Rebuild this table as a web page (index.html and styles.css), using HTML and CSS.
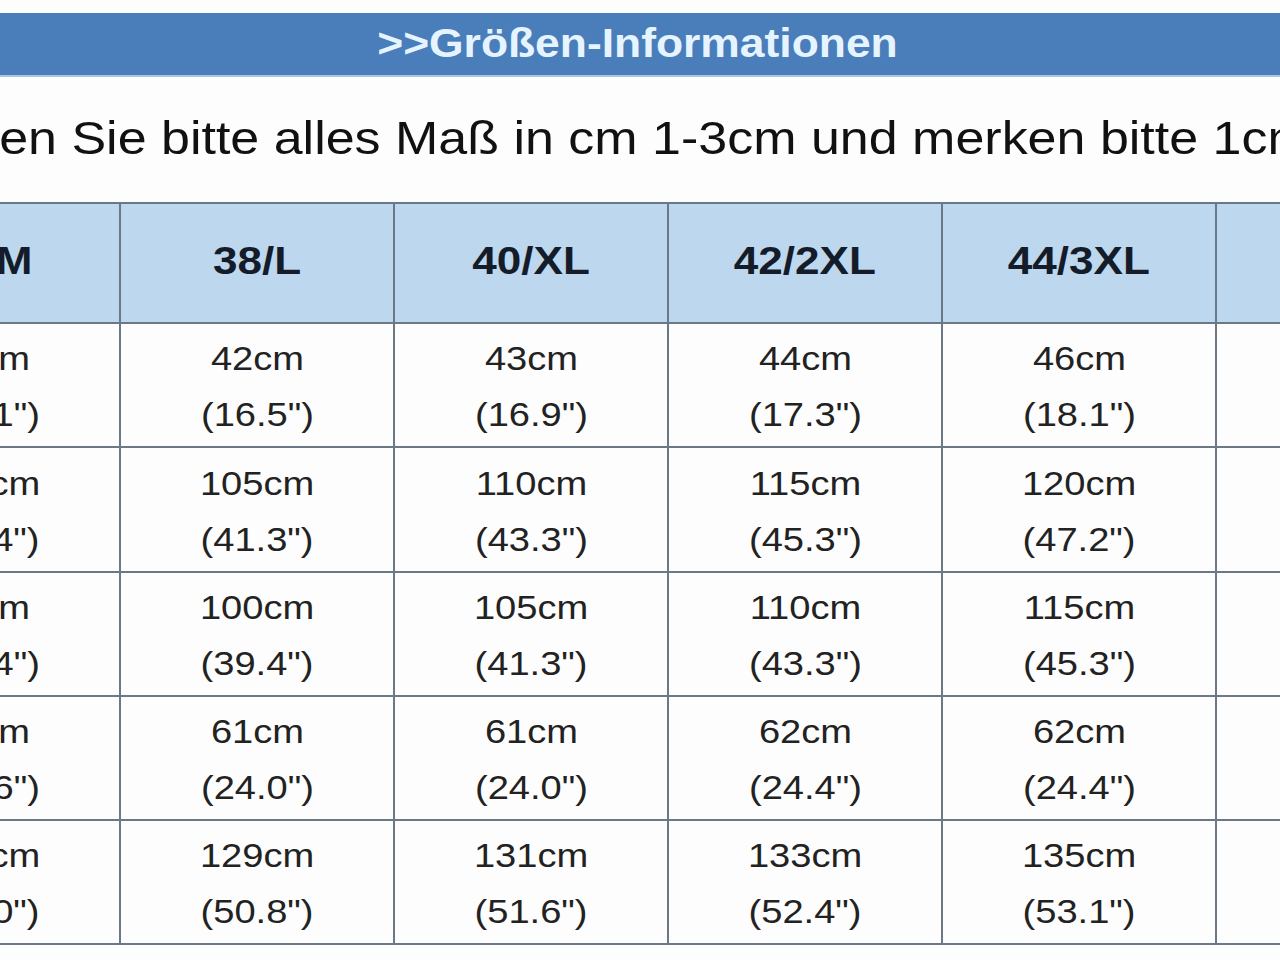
FILE: index.html
```html
<!DOCTYPE html>
<html lang="de">
<head>
<meta charset="utf-8">
<title>Größen-Informationen</title>
<link rel="stylesheet" href="styles.css">
</head>
<body>
<div class="page">
  <div class="titlebar"><span class="title">&gt;&gt;Größen-Informationen</span></div>
  <p class="intro"><span class="intro-text">Messen Sie bitte alles Maß in cm 1-3cm und merken bitte 1cm=0.39inch</span></p>
  <table class="sizes">
    <thead>
      <tr>
        <th><span class="hd">36/M</span></th>
        <th><span class="hd">38/L</span></th>
        <th><span class="hd">40/XL</span></th>
        <th><span class="hd">42/2XL</span></th>
        <th><span class="hd">44/3XL</span></th>
        <th><span class="hd">46/4XL</span></th>
      </tr>
    </thead>
    <tbody>
      <tr>
        <td><span class="val">41cm<br>(16.1")</span></td>
        <td><span class="val">42cm<br>(16.5")</span></td>
        <td><span class="val">43cm<br>(16.9")</span></td>
        <td><span class="val">44cm<br>(17.3")</span></td>
        <td><span class="val">46cm<br>(18.1")</span></td>
        <td><span class="val">47cm<br>(18.5")</span></td>
      </tr>
      <tr>
        <td><span class="val">100cm<br>(39.4")</span></td>
        <td><span class="val">105cm<br>(41.3")</span></td>
        <td><span class="val">110cm<br>(43.3")</span></td>
        <td><span class="val">115cm<br>(45.3")</span></td>
        <td><span class="val">120cm<br>(47.2")</span></td>
        <td><span class="val">125cm<br>(49.2")</span></td>
      </tr>
      <tr>
        <td><span class="val">95cm<br>(37.4")</span></td>
        <td><span class="val">100cm<br>(39.4")</span></td>
        <td><span class="val">105cm<br>(41.3")</span></td>
        <td><span class="val">110cm<br>(43.3")</span></td>
        <td><span class="val">115cm<br>(45.3")</span></td>
        <td><span class="val">120cm<br>(47.2")</span></td>
      </tr>
      <tr>
        <td><span class="val">60cm<br>(23.6")</span></td>
        <td><span class="val">61cm<br>(24.0")</span></td>
        <td><span class="val">61cm<br>(24.0")</span></td>
        <td><span class="val">62cm<br>(24.4")</span></td>
        <td><span class="val">62cm<br>(24.4")</span></td>
        <td><span class="val">63cm<br>(24.8")</span></td>
      </tr>
      <tr>
        <td><span class="val">127cm<br>(50.0")</span></td>
        <td><span class="val">129cm<br>(50.8")</span></td>
        <td><span class="val">131cm<br>(51.6")</span></td>
        <td><span class="val">133cm<br>(52.4")</span></td>
        <td><span class="val">135cm<br>(53.1")</span></td>
        <td><span class="val">137cm<br>(53.9")</span></td>
      </tr>
    </tbody>
  </table>
</div>
</body>
</html>
```
FILE: styles.css
```css
html, body {
  margin: 0;
  padding: 0;
  background: #fdfdfd;
}

body {
  width: 1280px;
  height: 960px;
  overflow: hidden;
  font-family: "Liberation Sans", Arial, sans-serif;
}

.page {
  padding-top: 13px;
}

.titlebar {
  height: 62px;
  background: #4a7ebb;
  border-bottom: 2px solid #a9c6e6;
  text-align: center;
  line-height: 60px;
  padding-right: 6px;
}

.title {
  display: inline-block;
  font-size: 40px;
  font-weight: bold;
  color: #e6f4ff;
  transform: scaleX(1.11);
}

.intro {
  margin: 34px 0 0 -125px;
  height: 54px;
  line-height: 54px;
  font-size: 46px;
  color: #111;
  white-space: nowrap;
}

.intro-text {
  display: inline-block;
  transform: scaleX(1.13);
  transform-origin: 0 50%;
}

.sizes {
  border-collapse: collapse;
  table-layout: fixed;
  width: 1646px;
  margin: 37px 0 0 -155px;
}

.sizes th,
.sizes td {
  border: 2px solid #6b7886;
  text-align: center;
  vertical-align: middle;
  padding: 0;
}

.sizes th {
  height: 114px;
  padding-bottom: 4px;
  background: #bdd7ee;
  font-size: 39px;
  font-weight: bold;
  color: #141c2a;
}

.sizes td {
  height: 120px;
  padding-top: 2px;
  background: #fdfdfd;
  font-size: 34px;
  line-height: 56px;
  color: #222;
}

.sizes tbody tr:nth-child(2) td {
  height: 121px;
}

.hd,
.val {
  display: inline-block;
}

.hd {
  transform: scaleX(1.13);
}

.val {
  transform: scaleX(1.12);
}
```
